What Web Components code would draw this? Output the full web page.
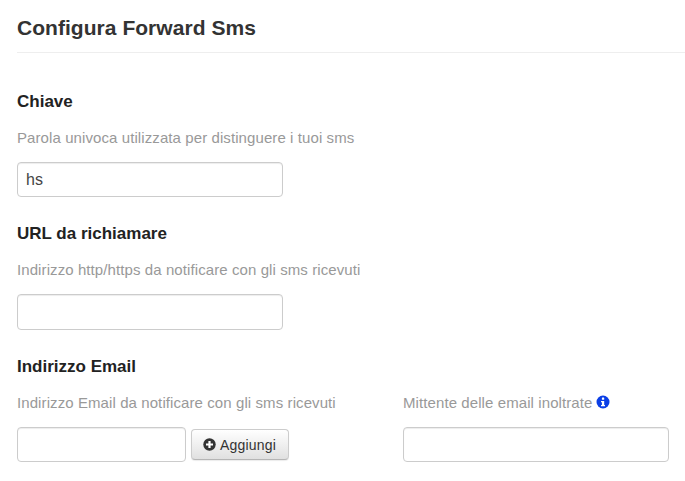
<!DOCTYPE html>
<html lang="it"><head><meta charset="utf-8"><title>Configura Forward Sms</title>
<style>html,body{margin:0;padding:0;background:#fff;overflow:hidden}body{font-family:"Liberation Sans",Arial,sans-serif;color:#333}</style>
</head><body>
<config-page>
  <page-header>Configura Forward Sms</page-header>
  <form-section style="height:132px" heading="Chiave" hint="Parola univoca utilizzata per distinguere i tuoi sms" value="hs" box="35"></form-section>
  <form-section style="height:133px" heading="URL da richiamare" hint="Indirizzo http/https da notificare con gli sms ricevuti" box="36"></form-section>
  <email-row></email-row>
</config-page>
<script>
const def=(n,html,init)=>customElements.define(n,class extends HTMLElement{connectedCallback(){if(this.shadowRoot)return;const s=this.attachShadow({mode:'open'});s.innerHTML=html;init&&init(this,s)}});
const inputCss=`.in{box-sizing:border-box;display:block;width:266px;height:35px;border:1px solid #ccc;border-radius:4px;box-shadow:inset 0 1px 1px rgba(0,0,0,.075);padding:6px 8px;font:16px "Liberation Sans",Arial,sans-serif;color:#444;background:#fff;outline:none;margin:0}`;
const headCss=`h4{margin:0;font-size:17px;line-height:18px;font-weight:700;color:#222;padding-top:1px;margin-bottom:17px}p{margin:0 0 14px;font-size:15px;line-height:20px;color:#999;letter-spacing:.09px}`;
def('config-page',`<style>:host{display:block;padding:0 0 0 17px}</style><slot></slot>`);
def('page-header',`<style>:host{display:block;border-bottom:1px solid #eee;height:52px;box-sizing:content-box;margin-bottom:39px}h1{margin:0;padding-top:16px;font-size:21px;line-height:24px;font-weight:700;color:#333;letter-spacing:.04px}</style><h1><slot></slot></h1>`);
def('form-section',`<style>:host{display:block}${headCss}${inputCss}</style><h4></h4><p></p><input class="in" type="text">`,(h,s)=>{
 s.querySelector('h4').textContent=h.getAttribute('heading');
 s.querySelector('p').textContent=h.getAttribute('hint');
 const i=s.querySelector('input');i.value=h.getAttribute('value')||'';i.style.height=h.getAttribute('box')+'px';
});
def('info-icon',`<style>:host{display:inline-block;width:14px;height:14px;vertical-align:-1px;margin-left:-1px}svg{display:block}</style><svg width="14" height="14" viewBox="0 0 14 14"><circle cx="7" cy="7" r="6.5" fill="#0b3fe6"/><rect x="5.9" y="2.6" width="2.3" height="2.2" rx=".4" fill="#fff"/><path d="M5 6h3.2v4.1H9v1.2H5v-1.2h.9V7.2H5z" fill="#fff"/></svg>`);
def('plus-icon',`<style>:host{display:inline-block;width:13px;height:13px;vertical-align:-1px}svg{display:block}</style><svg width="13" height="13" viewBox="0 0 13 13"><circle cx="6.5" cy="6.5" r="6.2" fill="#333"/><path d="M5.4 3h2.200v2.400H10v2.200H7.600V10H5.400V7.600H3V5.400h2.400z" fill="#fff"/></svg>`);
def('add-button',`<style>:host{display:block}button{box-sizing:border-box;display:flex;align-items:center;gap:4px;width:98px;height:31px;padding:0 0 0 11px;border:1px solid #ccc;border-bottom-color:#b5b5b5;border-radius:4px;background:linear-gradient(#fff,#e0e0e0);box-shadow:0 1px 1px rgba(0,0,0,.08);font:14px/20px "Liberation Sans",Arial,sans-serif;letter-spacing:.2px;color:#333;margin:0}</style><button type="button"><plus-icon></plus-icon><span><slot></slot></span></button>`);
def('email-row',`<style>:host{display:grid;grid-template-columns:386px 266px}${headCss}${inputCss}h4{grid-column:1/3}.row{display:flex;align-items:center;gap:5px}.row .in{width:169px}</style>
<h4>Indirizzo Email</h4>
<div><p>Indirizzo Email da notificare con gli sms ricevuti</p><div class="row"><input class="in" type="text"><add-button>Aggiungi</add-button></div></div>
<div><p>Mittente delle email inoltrate <info-icon></info-icon></p><input class="in" type="text"></div>`);
</script>
</body></html>
